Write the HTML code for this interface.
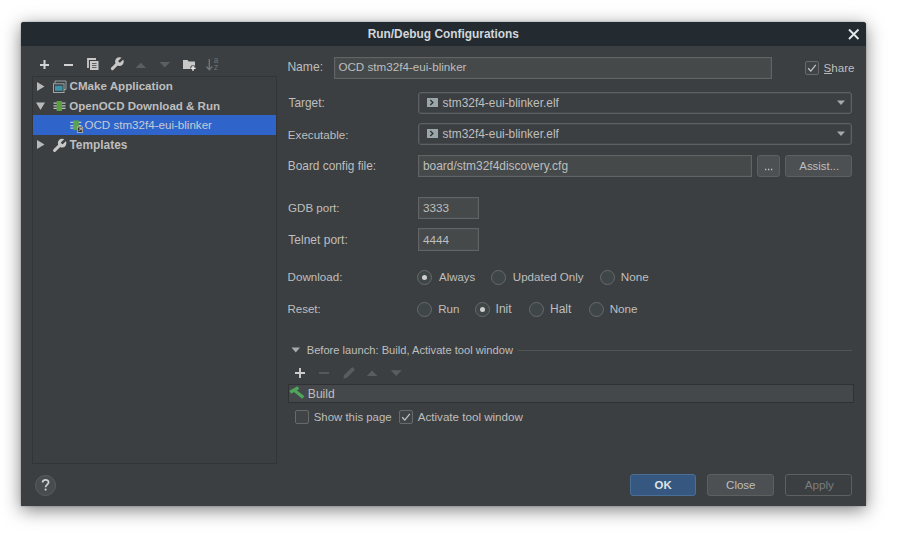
<!DOCTYPE html>
<html><head><meta charset="utf-8">
<style>
html,body{margin:0;padding:0;width:900px;height:534px;background:#fff;overflow:hidden;}
body{font-family:"Liberation Sans",sans-serif;font-size:11.6px;color:#bebebe;}
.a{position:absolute;}
.t{position:absolute;white-space:pre;line-height:14px;height:14px;}
.b{font-weight:bold;}
#win{position:absolute;left:21px;top:22px;width:845px;height:484px;background:#3c3f41;box-shadow:0 4px 18px rgba(0,0,0,0.5),0 0 2px rgba(0,0,0,0.35);border-radius:3px 3px 0 0;}
#title{position:absolute;left:21px;top:22px;width:845px;height:24px;background:#232b31;border-radius:3px 3px 0 0;}
.field{position:absolute;background:#45494a;border:1px solid #616364;box-sizing:border-box;box-shadow:inset 0 0 0 1px #4a4d4f;}
.combo{position:absolute;background:#3c3f41;border:1px solid #5e6163;box-sizing:border-box;border-radius:3px;box-shadow:inset 0 0 0 1px #46494b;}
.btn{position:absolute;background:#4c5052;border:1px solid #5e6060;box-sizing:border-box;border-radius:3px;}
.radio{position:absolute;width:15px;height:15px;border-radius:50%;border:1px solid #68696a;box-sizing:border-box;background:#3f4647;}
.radio.on::after{content:"";position:absolute;left:4px;top:4px;width:5px;height:5px;border-radius:50%;background:#cfcfcf;}
.cb{position:absolute;width:14px;height:14px;border-radius:2px;border:1px solid #68696a;box-sizing:border-box;background:#404446;}
</style></head><body>
<div id="win"></div>
<div id="title"></div>
<svg class="a" style="left:845px;top:26px" width="18" height="18" viewBox="0 0 18 18"><path d="M4 3.5L13.5 13M13.5 3.5L4 13" stroke="#e4eaea" stroke-width="1.9"/></svg>
<svg class="a" style="left:30px;top:52px" width="200" height="24" viewBox="0 0 200 24">
  <path d="M14.5 8v9M10 13h9" stroke="#d2d2d2" stroke-width="2"/>
  <path d="M34 13h9" stroke="#d2d2d2" stroke-width="2"/>
  <path d="M58 16V7h8" fill="none" stroke="#c8c8c8" stroke-width="1.8"/>
  <rect x="60" y="9" width="8.5" height="9" fill="#c8c8c8"/>
  <path d="M62 11.5h4.5M62 13.5h4.5M62 15.5h4.5" stroke="#55585a" stroke-width="0.9"/>
  <mask id="wm1"><rect width="200" height="24" fill="#fff"/><path d="M89.6 9.4L95 4" stroke="#000" stroke-width="2.6" stroke-linecap="round"/></mask>
  <circle cx="89.4" cy="9.6" r="4.3" fill="#c8c8c8" mask="url(#wm1)"/>
  <path d="M82.4 16.6L88 11" stroke="#c8c8c8" stroke-width="3" stroke-linecap="round"/>
  <path d="M105.5 16l5.3-5.3 5.3 5.3z" fill="#5c5f61"/>
  <path d="M129.5 10h10.6l-5.3 5.5z" fill="#5c5f61"/>
  <path d="M153 8h4.5l1.2 1.5H165V17h-12z" fill="#c8c8c8"/>
  <path d="M163 13.3v6M160 16.3h6" stroke="#3c3f41" stroke-width="3.2"/>
  <path d="M163 13.8v5M160.5 16.3h5" stroke="#ececec" stroke-width="1.5"/>
  <path d="M179.3 7v10.5M176.3 14.5l3 3.2 3-3.2" fill="none" stroke="#717375" stroke-width="1.4"/>
  <text x="183.8" y="11.2" font-size="8.2" font-family="Liberation Sans" fill="#717375">a</text>
  <text x="184" y="18.2" font-size="8.2" font-family="Liberation Sans" fill="#717375">z</text>
</svg>
<div class="a" style="left:32px;top:76px;width:245px;height:388px;box-sizing:border-box;border:1px solid #323436;"></div>
<div class="a" style="left:33px;top:115px;width:243px;height:20px;background:#2f65ca;"></div>
<svg class="a" style="left:34px;top:78px" width="40" height="76" viewBox="0 0 40 76">
  <path d="M3 4v9l7.5-4.5z" fill="#b9b9b9"/>
  <path d="M21 5.5V3h11v8.5h-2" fill="none" stroke="#a3abae" stroke-width="0.9"/>
  <rect x="19.5" y="5.8" width="10.5" height="8.7" fill="#3c3f41" stroke="#9ca5a8" stroke-width="1"/>
  <rect x="21" y="7.8" width="7.5" height="5" fill="#3a93a8"/>
  <path d="M2 24.5h9l-4.5 7.5z" fill="#b9b9b9"/>
  <path d="M19.5 25.2h12M19.5 27.8h12M19.5 30.4h12" stroke="#c0c2c3" stroke-width="1.2"/>
  <rect x="22.6" y="23" width="5.4" height="10" fill="#57a23f"/>
  <path d="M3 62v9l7.5-4.5z" fill="#b9b9b9"/>
  <mask id="wm2"><rect width="40" height="76" fill="#fff"/><path d="M28.3 64.9L34 59.2" stroke="#000" stroke-width="2.6" stroke-linecap="round"/></mask>
  <circle cx="28.1" cy="65.1" r="4.3" fill="#c8c8c8" mask="url(#wm2)"/>
  <path d="M20.6 72.4L26.5 66.6" stroke="#c8c8c8" stroke-width="3" stroke-linecap="round"/>
</svg>
<svg class="a" style="left:68px;top:118px" width="18" height="18" viewBox="0 0 18 18">
  <path d="M2.3 4.4h11M2.3 7.6h11M2.3 10.1h11" stroke="#b8c6e0" stroke-width="1.1"/>
  <rect x="5.3" y="2.4" width="5.5" height="9.7" fill="#5ba350"/>
  <rect x="9" y="8.7" width="6" height="6" fill="#cfcab4"/>
  <rect x="9.7" y="9.4" width="4.6" height="4.6" fill="#333"/>
  <path d="M10.6 13.1l2.6-2.6M11.4 10.4h1.9v1.9" fill="none" stroke="#dddddd" stroke-width="0.8"/>
</svg>
<div class="field" style="left:334px;top:57px;width:438px;height:22px;"></div>
<div class="cb" style="left:805px;top:61px;"></div>
<svg class="a" style="left:805px;top:61px" width="14" height="14" viewBox="0 0 14 14"><path d="M3.2 7.2l2.6 2.9 5-6.2" fill="none" stroke="#c4c4c4" stroke-width="1.3"/></svg>
<div class="a" style="left:824px;top:73px;width:8px;height:1px;background:#b5b5b5;"></div>
<div class="combo" style="left:418px;top:92px;width:434px;height:22px;"></div>
<svg class="a" style="left:426px;top:98px" width="12" height="10" viewBox="0 0 12 10"><rect x="1" y="0" width="11" height="9" fill="#9ba6a9"/><path d="M4.3 2l2.6 2.5-2.6 2.5" fill="none" stroke="#2e3134" stroke-width="1.3"/></svg>
<svg class="a" style="left:836px;top:100px" width="10" height="6" viewBox="0 0 10 6"><path d="M1 0.5h8l-4 4.5z" fill="#a9a9a9"/></svg>
<div class="combo" style="left:418px;top:123px;width:434px;height:22px;"></div>
<svg class="a" style="left:426px;top:129px" width="12" height="10" viewBox="0 0 12 10"><rect x="1" y="0" width="11" height="9" fill="#9ba6a9"/><path d="M4.3 2l2.6 2.5-2.6 2.5" fill="none" stroke="#2e3134" stroke-width="1.3"/></svg>
<svg class="a" style="left:836px;top:131px" width="10" height="6" viewBox="0 0 10 6"><path d="M1 0.5h8l-4 4.5z" fill="#a9a9a9"/></svg>
<div class="field" style="left:418px;top:155px;width:334px;height:22px;"></div>
<div class="btn" style="left:757px;top:155px;width:23px;height:22px;"></div>
<svg class="a" style="left:757px;top:155px" width="23" height="22" viewBox="0 0 23 22"><path d="M8 14.5h1.3M11 14.5h1.3M14 14.5h1.3" stroke="#c0c0c0" stroke-width="1.3"/></svg>
<div class="btn" style="left:785px;top:155px;width:67px;height:22px;"></div>
<div class="field" style="left:418px;top:197px;width:61px;height:22px;"></div>
<div class="field" style="left:418px;top:228px;width:61px;height:23px;"></div>
<div class="radio on" style="left:417px;top:270px;"></div>
<div class="radio" style="left:491px;top:270px;"></div>
<div class="radio" style="left:600px;top:270px;"></div>
<div class="radio" style="left:417px;top:302px;"></div>
<div class="radio on" style="left:475px;top:302px;"></div>
<div class="radio" style="left:529px;top:302px;"></div>
<div class="radio" style="left:589px;top:302px;"></div>
<svg class="a" style="left:290px;top:346px" width="12" height="8" viewBox="0 0 12 8"><path d="M1.5 1.5h8.5l-4.25 5z" fill="#a9a9a9"/></svg>
<div class="a" style="left:518px;top:350px;width:334px;height:1px;background:#515354;"></div>
<svg class="a" style="left:288px;top:362px" width="120" height="22" viewBox="0 0 120 22">
  <path d="M12 6v10M7 11h10" stroke="#cdcdcd" stroke-width="1.9"/>
  <path d="M31 11h10" stroke="#5a5d5f" stroke-width="1.8"/>
  <path d="M55.3 16.7l0.9-3.6 7.3-7.3a1.3 1.3 0 0 1 1.8 0l0.9 0.9a1.3 1.3 0 0 1 0 1.8l-7.3 7.3z" fill="#5a5d5f"/>
  <path d="M78.8 14l5.3-5.5 5.3 5.5z" fill="#5a5d5f"/>
  <path d="M102.7 8.2h11l-5.5 5.8z" fill="#5a5d5f"/>
</svg>
<div class="a" style="left:288px;top:384px;width:566px;height:19px;box-sizing:border-box;border:1px solid #2f3133;background:#45484a;"></div>
<svg class="a" style="left:288px;top:384px" width="18" height="18" viewBox="0 0 18 18">
  <path d="M2.2 8.3L10.4 3.6" stroke="#4fa65b" stroke-width="3.4"/>
  <path d="M6.6 6.6L15.3 13.6" stroke="#4fa65b" stroke-width="3.2"/>
</svg>
<div class="cb" style="left:295px;top:410px;"></div>
<div class="cb" style="left:399px;top:410px;"></div>
<svg class="a" style="left:399px;top:410px" width="14" height="14" viewBox="0 0 14 14"><path d="M3.2 7.2l2.6 2.9 5-6.2" fill="none" stroke="#c4c4c4" stroke-width="1.3"/></svg>
<div class="a" style="left:35px;top:475px;width:21px;height:21px;border-radius:50%;background:#494c4e;border:1px solid #5b5d5f;box-sizing:border-box;"></div>
<svg class="a" style="left:35px;top:475px" width="22" height="22" viewBox="0 0 22 22"><path d="M7.6 7.4C7.6 4.3 13.6 4.1 13.6 7.2C13.6 9.5 10.6 9.7 10.6 12.3" fill="none" stroke="#d0d0d0" stroke-width="1.75"/><circle cx="10.6" cy="14.6" r="1.05" fill="#d0d0d0"/></svg>
<div class="btn" style="left:630px;top:474px;width:66px;height:22px;background:#365880;border-color:#4a6f95;"></div>
<div class="btn" style="left:707px;top:474px;width:67px;height:22px;"></div>
<div class="btn" style="left:785px;top:474px;width:67px;height:22px;background:transparent;"></div>
<div class="t b" style="left:367.7px;top:27px;font-size:11.9px;color:#d2d7db;">Run/Debug Configurations</div>
<div class="t b" style="left:69.54px;top:79px;font-size:11.6px;">CMake Application</div>
<div class="t b" style="left:69.34px;top:99px;font-size:11.55px;">OpenOCD Download &amp; Run</div>
<div class="t" style="left:84.42px;top:118px;font-size:11.6px;color:#c6cbd6;">OCD stm32f4-eui-blinker</div>
<div class="t b" style="left:69.47999999999999px;top:138px;font-size:11.9px;">Templates</div>
<div class="t" style="left:287.4px;top:60px;font-size:12.1px;">Name:</div>
<div class="t" style="left:338.42px;top:60px;font-size:11.65px;">OCD stm32f4-eui-blinker</div>
<div class="t" style="left:823.62px;top:61px;font-size:11.6px;">Share</div>
<div class="t" style="left:288.55px;top:96px;font-size:11.85px;">Target:</div>
<div class="t" style="left:442.53999999999996px;top:96px;font-size:11.9px;">stm32f4-eui-blinker.elf</div>
<div class="t" style="left:287.87px;top:128px;font-size:11.6px;">Executable:</div>
<div class="t" style="left:442.53999999999996px;top:127px;font-size:11.9px;">stm32f4-eui-blinker.elf</div>
<div class="t" style="left:287.85px;top:159px;font-size:11.85px;">Board config file:</div>
<div class="t" style="left:422.96000000000004px;top:159px;font-size:11.95px;">board/stm32f4discovery.cfg</div>
<div class="t" style="left:799.3px;top:159px;font-size:11.4px;">Assist...</div>
<div class="t" style="left:288.02000000000004px;top:201px;font-size:11.6px;">GDB port:</div>
<div class="t" style="left:423.03px;top:201px;font-size:11.7px;">3333</div>
<div class="t" style="left:288.36px;top:233px;font-size:12.0px;">Telnet port:</div>
<div class="t" style="left:423.03px;top:233px;font-size:11.7px;">4444</div>
<div class="t" style="left:287.6px;top:270px;font-size:11.6px;">Download:</div>
<div class="t" style="left:439px;top:270px;font-size:11.45px;">Always</div>
<div class="t" style="left:512.7700000000001px;top:270px;font-size:11.6px;">Updated Only</div>
<div class="t" style="left:620.76px;top:270px;font-size:11.7px;">None</div>
<div class="t" style="left:287.47999999999996px;top:302px;font-size:11.5px;">Reset:</div>
<div class="t" style="left:438.2px;top:302px;font-size:11.6px;">Run</div>
<div class="t" style="left:495.6px;top:302px;font-size:12.0px;">Init</div>
<div class="t" style="left:550.0px;top:302px;font-size:12.0px;">Halt</div>
<div class="t" style="left:609.66px;top:302px;font-size:11.7px;">None</div>
<div class="t" style="left:306.71000000000004px;top:343px;font-size:11.15px;">Before launch: Build, Activate tool window</div>
<div class="t" style="left:307.82px;top:387px;font-size:12.1px;">Build</div>
<div class="t" style="left:313.73px;top:410px;font-size:11.4px;">Show this page</div>
<div class="t" style="left:417.8px;top:410px;font-size:11.6px;">Activate tool window</div>
<div class="t b" style="left:654.55px;top:478px;font-size:11.4px;color:#dfe3e8;">OK</div>
<div class="t" style="left:726.12px;top:478px;font-size:11.5px;">Close</div>
<div class="t" style="left:804.7px;top:478px;font-size:11.7px;color:#7b7d7f;">Apply</div>
</body></html>
